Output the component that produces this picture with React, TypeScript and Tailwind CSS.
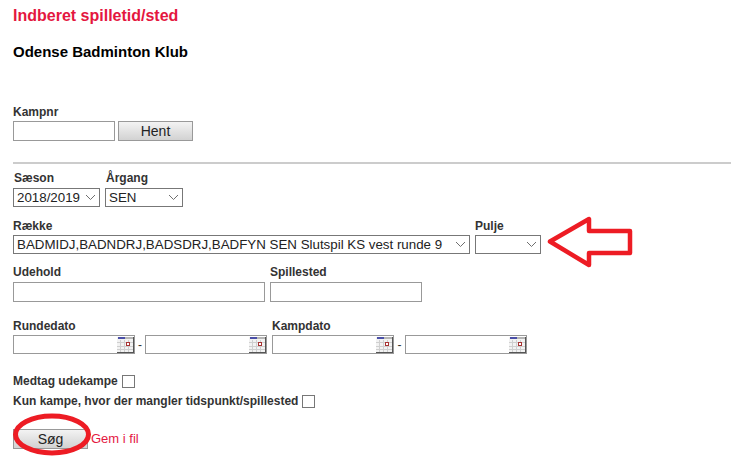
import React from "react";

const Label = ({ children, className = "" }: { children: React.ReactNode; className?: string }) => (
  <div className={`h-[14px] text-[12px] leading-[14px] font-bold text-[#333333] ${className}`}>{children}</div>
);

const Chevron = () => (
  <svg className="pointer-events-none absolute right-[2px] top-[4px]" width="13" height="9" viewBox="0 0 13 9" fill="none">
    <path d="M2 2 L6.5 6.5 L11 2" stroke="#6f6f6f" strokeWidth="1" />
  </svg>
);

const Select = ({ value, className }: { value: string; className: string }) => (
  <div className={`relative h-[19px] border border-[#777777] bg-white ${className}`}>
    <select
      defaultValue={value}
      className="block h-[17px] w-full appearance-none bg-transparent py-0 pl-[3px] pr-[16px] text-[13.33px] leading-[15px] text-[#222222] outline-none"
    >
      <option>{value}</option>
    </select>
    <Chevron />
  </div>
);

const Input = ({ className }: { className: string }) => (
  <input type="text" className={`block h-[20px] border border-[#999999] bg-white ${className}`} />
);

const Calendar = () => (
  <svg className="absolute right-0 top-[1px]" width="17" height="16" viewBox="0 0 17 16" shapeRendering="crispEdges">
    <rect x="0" y="0" width="17" height="16" fill="#f2f2f2" />
    <path d="M0 5.5H16M0 9.5H16M0 12.5H16M3.5 3V16M7.5 3V16M11.5 3V16" stroke="#cfcfcf" strokeWidth="1" />
    <rect x="1" y="0" width="7" height="2" fill="#4a4fa8" />
    <rect x="8" y="0" width="8" height="2" fill="#b5b5b5" />
    <rect x="9.5" y="5.5" width="3" height="3" fill="#ffffff" stroke="#a83232" strokeWidth="1" />
    <path d="M16.5 0V16M0 15.5H17" stroke="#555555" strokeWidth="1" />
  </svg>
);

const DateInput = ({ className }: { className: string }) => (
  <div className={`relative h-[19px] border border-[#999999] bg-white ${className}`}>
    <input type="text" className="block h-full w-full outline-none" />
    <Calendar />
  </div>
);

const Button = ({ children }: { children: React.ReactNode }) => (
  <button className="h-[20px] w-[75px] border border-[#999999] bg-gradient-to-b from-[#f3f3f3] to-[#d2d2d2] text-[14px] leading-[17px] text-[#222222]">
    {children}
  </button>
);

const Check = () => <span className="ml-[4px] inline-block h-[13px] w-[13px] border border-[#777777] bg-white" />;

export default function App() {
  return (
    <div className="relative h-[463px] w-[735px] overflow-hidden bg-white pl-[13px] pt-[8px] font-['Liberation_Sans',Arial,sans-serif]">
      <h1 className="text-[16px] leading-[16px] font-bold text-[#e4173f]">Indberet spilletid/sted</h1>
      <h2 className="mt-[20px] text-[15px] leading-[16px] font-bold text-black">Odense Badminton Klub</h2>

      <Label className="mt-[45px]">Kampnr</Label>
      <div className="mt-[2px] flex gap-[3px]">
        <Input className="w-[102px]" />
        <Button>Hent</Button>
      </div>

      <hr className="mt-[21px] mr-[4px] h-[2px] border-0 bg-[#cccccc]" />

      <div className="mt-[7px] flex gap-[5px]">
        <div>
          <Label className="pl-[1px]">Sæson</Label>
          <Select value="2018/2019" className="mt-[3px] w-[87px]" />
        </div>
        <div>
          <Label className="pl-[1px]">Årgang</Label>
          <Select value="SEN" className="mt-[3px] w-[78px]" />
        </div>
      </div>

      <div className="mt-[12px] flex gap-[5px]">
        <div>
          <Label>Række</Label>
          <Select value="BADMIDJ,BADNDRJ,BADSDRJ,BADFYN SEN Slutspil KS vest runde 9" className="mt-[2px] w-[457px]" />
        </div>
        <div>
          <Label>Pulje</Label>
          <Select value="" className="mt-[2px] w-[66px]" />
        </div>
      </div>

      <div className="mt-[11px] flex gap-[5px]">
        <div>
          <Label>Udehold</Label>
          <Input className="mt-[3px] w-[252px]" />
        </div>
        <div>
          <Label>Spillested</Label>
          <Input className="mt-[3px] w-[152px]" />
        </div>
      </div>

      <div className="mt-[17px] flex gap-[5px]">
        <div>
          <Label>Rundedato</Label>
          <div className="mt-[2px] flex items-center">
            <DateInput className="w-[122px]" />
            <span className="w-[10px] text-center text-[12px] text-[#333333]">-</span>
            <DateInput className="w-[122px]" />
          </div>
        </div>
        <div>
          <Label>Kampdato</Label>
          <div className="mt-[2px] flex items-center">
            <DateInput className="w-[122px]" />
            <span className="w-[11px] text-center text-[12px] text-[#333333]">-</span>
            <DateInput className="w-[122px]" />
          </div>
        </div>
      </div>

      <div className="mt-[20px] flex h-[14px] items-center text-[12px] leading-[14px] font-bold text-[#333333]">
        Medtag udekampe<Check />
      </div>
      <div className="mt-[6px] flex h-[14px] items-center text-[12px] leading-[14px] font-bold text-[#333333]">
        Kun kampe, hvor der mangler tidspunkt/spillested<Check />
      </div>

      <div className="mt-[21px] flex items-center gap-[3px]">
        <Button>Søg</Button>
        <a className="text-[13px] leading-[14px] text-[#e4173f]">Gem i fil</a>
      </div>

      <svg className="pointer-events-none absolute left-0 top-0" width="735" height="463" viewBox="0 0 735 463" fill="none">
        <ellipse cx="52" cy="434.5" rx="36.5" ry="18.5" stroke="#ed1c24" strokeWidth="5" />
        <path d="M550 241.5 L589 219 L589 231 L630 231 L630 253 L589 253 L589 265 Z" stroke="#ed1c24" strokeWidth="4.5" strokeLinejoin="round" />
      </svg>
    </div>
  );
}
